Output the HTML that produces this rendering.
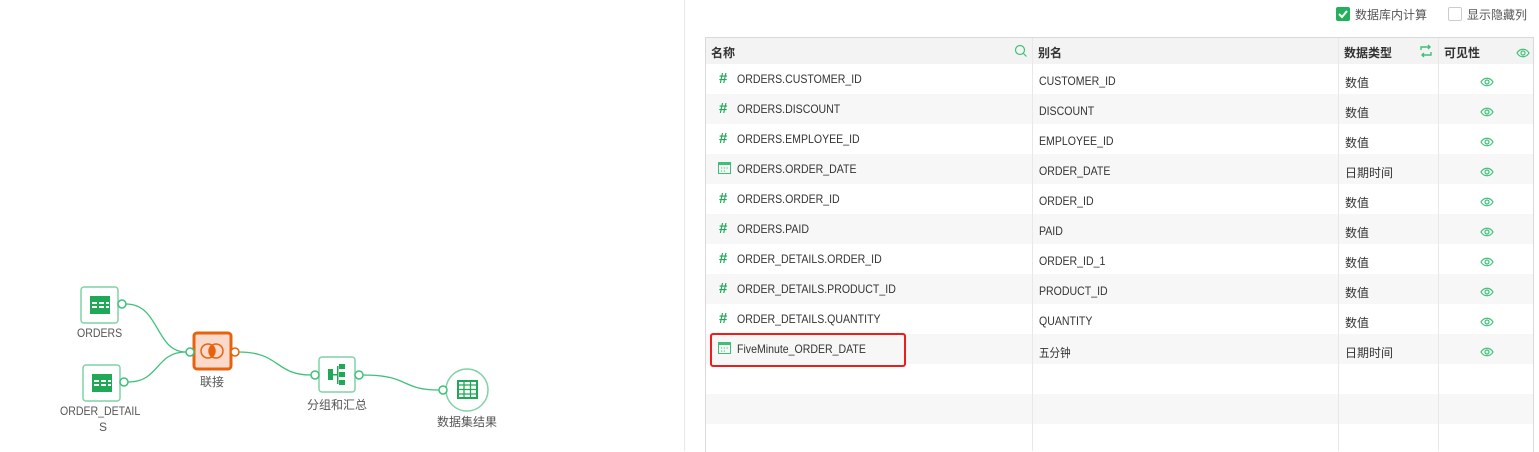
<!DOCTYPE html>
<html><head><meta charset="utf-8"><style>
body{margin:0;width:1539px;height:451px;overflow:hidden;background:#fff;font-family:"Liberation Sans","Noto Sans CJK SC",sans-serif;color:#333;position:relative}
.a{position:absolute}
.t{font-size:12px;white-space:nowrap}
.row{position:absolute;left:706px;width:827px;height:30px}
.g{background:#f7f7f7}
.c{position:absolute;font-size:12px;white-space:nowrap;color:#333}
.s{transform:scaleX(0.88);transform-origin:0 0}
</style></head><body>
<div class="a" style="left:684px;top:0;width:1px;height:451px;background:#e8e8e8"></div>

<svg class="a" style="left:0;top:0" width="684" height="451">
<g fill="none" stroke="#3fc07a" stroke-width="1.3">
<path d="M126 304 C160 304 155 352 186 352"/>
<path d="M128 382 C160 382 155 352 186 352"/>
<path d="M239 352 C280 352 275 375 311 375"/>
<path d="M363 375 C410 375 400 390 439 390"/>
</g>
<g fill="#fff" stroke-width="1.5">
<rect x="81" y="287" width="37" height="36" rx="3" stroke="#7fd4a6"/>
<rect x="83" y="365" width="37" height="36" rx="3" stroke="#7fd4a6"/>
<rect x="194" y="333" width="37" height="36" rx="3" stroke="#e8620e" stroke-width="3" fill="#fbdacb"/>
<rect x="319" y="357" width="36" height="35" rx="3" stroke="#7fd4a6"/>
<circle cx="467" cy="390" r="21" stroke="#7fd4a6"/>
<circle cx="122" cy="304" r="4" stroke="#3fc07a"/>
<circle cx="124" cy="382" r="4" stroke="#3fc07a"/>
<circle cx="190" cy="352" r="4" stroke="#3fc07a"/>
<circle cx="235" cy="352" r="4" stroke="#e8620e"/>
<circle cx="315" cy="375" r="4" stroke="#3fc07a"/>
<circle cx="359" cy="375" r="4" stroke="#3fc07a"/>
<circle cx="443" cy="390" r="4" stroke="#3fc07a"/>
</g>
<g fill="#1fa956">
<rect x="90" y="296" width="20" height="18"/><rect x="92" y="374" width="20" height="18"/>
</g>
<g fill="#fff">
<rect x="92" y="302" width="5" height="2"/><rect x="99" y="302" width="5" height="2"/><rect x="106" y="302" width="3" height="2"/>
<rect x="92" y="306" width="5" height="2"/><rect x="99" y="306" width="5" height="2"/><rect x="106" y="306" width="3" height="2"/>
<rect x="94" y="380" width="5" height="2"/><rect x="101" y="380" width="5" height="2"/><rect x="108" y="380" width="3" height="2"/>
<rect x="94" y="384" width="5" height="2"/><rect x="101" y="384" width="5" height="2"/><rect x="108" y="384" width="3" height="2"/>
</g>
<circle cx="208" cy="351" r="7" fill="none" stroke="#e8620e" stroke-width="1.5"/>
<circle cx="216" cy="351" r="7" fill="none" stroke="#e8620e" stroke-width="1.5"/>
<path d="M212 345 a7 7 0 0 1 0 12 a7 7 0 0 1 0 -12z" fill="#e8620e"/>
<g fill="#1fa956"><rect x="328" y="369" width="5" height="11"/><rect x="333" y="374" width="4" height="1.5"/><rect x="337" y="366" width="1.5" height="18"/><rect x="339" y="364" width="6" height="5"/><rect x="339" y="372" width="6" height="5"/><rect x="339" y="380" width="6" height="5"/></g>
<rect x="458" y="381" width="19" height="17" fill="none" stroke="#1fa956" stroke-width="2"/>
<path d="M458 385h19M458 389.5h19M458 394h19M464 381v17M470.5 381v17" stroke="#1fa956" stroke-width="1.3"/>
</svg>
<div class="a t s" style="left:77px;top:326px;color:#555">ORDERS</div>
<div class="a t s" style="left:60px;top:404px;color:#555">ORDER_DETAIL</div>
<div class="a t" style="left:99px;top:420px;color:#555">S</div>
<div class="a t" style="left:200px;top:373px;color:#555">联接</div>
<div class="a t" style="left:307px;top:396px;color:#555">分组和汇总</div>
<div class="a t" style="left:437px;top:413px;color:#555">数据集结果</div>

<div class="a" style="left:1336px;top:7px;width:14px;height:14px;background:#23b05c;border-radius:2px"></div>
<svg class="a" style="left:1336px;top:7px" width="14" height="14"><path d="M3 7l3 3 5-6" fill="none" stroke="#fff" stroke-width="2"/></svg>
<div class="a t" style="left:1355px;top:6px;color:#555">数据库内计算</div>
<div class="a" style="left:1448px;top:7px;width:12px;height:12px;border:1px solid #ccc;border-radius:2px"></div>
<div class="a t" style="left:1467px;top:6px;color:#555">显示隐藏列</div>

<div class="a" style="left:705px;top:37px;width:827px;height:414px;border:1px solid #d9d9d9;border-bottom:none"></div>
<div class="a" style="left:706px;top:38px;width:827px;height:26px;background:#f3f3f3"></div>
<div class="row g" style="top:94px"></div><div class="row g" style="top:154px"></div><div class="row g" style="top:214px"></div><div class="row g" style="top:274px"></div><div class="row g" style="top:334px"></div><div class="row g" style="top:394px"></div>
<div class="a" style="left:1032px;top:38px;width:1px;height:413px;background:#e8e8e8"></div>
<div class="a" style="left:1338px;top:38px;width:1px;height:413px;background:#e8e8e8"></div>
<div class="a" style="left:1438px;top:38px;width:1px;height:413px;background:#e8e8e8"></div>
<div class="c" style="left:711px;top:44px;font-weight:bold">名称</div>
<div class="c" style="left:1038px;top:44px;font-weight:bold">别名</div>
<div class="c" style="left:1344px;top:44px;font-weight:bold">数据类型</div>
<div class="c" style="left:1444px;top:44px;font-weight:bold">可见性</div>
<svg class="a" style="left:1014px;top:44px" width="14" height="14"><circle cx="6" cy="6" r="4.5" fill="none" stroke="#3fc07a" stroke-width="1.2"/><path d="M9.5 9.5l3 3" stroke="#3fc07a" stroke-width="1.2"/></svg>
<svg class="a" style="left:1419px;top:44px" width="14" height="14"><path d="M2 6V3h9M9 1l2 2-2 2M12 8v3H3M5 13l-2-2 2-2" fill="none" stroke="#3fc07a" stroke-width="1.4"/></svg>

<div id="rows"></div>
<div class="a" style="left:710px;top:333px;width:192px;height:30px;border:2px solid #f01c1c;border-radius:3px"></div>
<script>
const d=[["#","ORDERS.CUSTOMER_ID","CUSTOMER_ID","数值"],["#","ORDERS.DISCOUNT","DISCOUNT","数值"],["#","ORDERS.EMPLOYEE_ID","EMPLOYEE_ID","数值"],["d","ORDERS.ORDER_DATE","ORDER_DATE","日期时间"],["#","ORDERS.ORDER_ID","ORDER_ID","数值"],["#","ORDERS.PAID","PAID","数值"],["#","ORDER_DETAILS.ORDER_ID","ORDER_ID_1","数值"],["#","ORDER_DETAILS.PRODUCT_ID","PRODUCT_ID","数值"],["#","ORDER_DETAILS.QUANTITY","QUANTITY","数值"],["d","FiveMinute_ORDER_DATE","五分钟","日期时间"]];
let h="";const eye='<svg width="14" height="10"><path d="M1 5C4 0 10 0 13 5C10 10 4 10 1 5z" fill="none" stroke="#3fc07a" stroke-width="1.2"/><circle cx="7" cy="5" r="2" fill="none" stroke="#3fc07a" stroke-width="1.2"/></svg>';
d.forEach((r,i)=>{const y=64+i*30;
const ic=r[0]=="#"?`<div class="c" style="left:719px;top:${y+6}px;color:#1fa956;font-weight:bold;font-size:15px">#</div>`:`<svg class="a" style="left:718px;top:${y+7}px" width="14" height="14"><rect x="0.5" y="1.5" width="12" height="11" fill="none" stroke="#3fc07a"/><rect x="0.5" y="1.5" width="12" height="2.5" fill="#3fc07a"/><path d="M3 7h1.2M5.8 7h1.2M8.6 7h1.2M3 10h1.2M5.8 10h1.2" stroke="#3fc07a"/></svg>`;
h+=ic+`<div class="c s" style="left:737px;top:${y+8}px">${r[1]}</div><div class="c s" style="left:1039px;top:${y+10}px">${r[2]}</div><div class="c" style="left:1345px;top:${y+10}px">${r[3]}</div><div class="a" style="left:1480px;top:${y+10}px">${eye}</div>`;});
h+=`<div class="a" style="left:1516px;top:45px">${eye}</div>`;
document.getElementById("rows").innerHTML=h;
</script>
</body></html>
